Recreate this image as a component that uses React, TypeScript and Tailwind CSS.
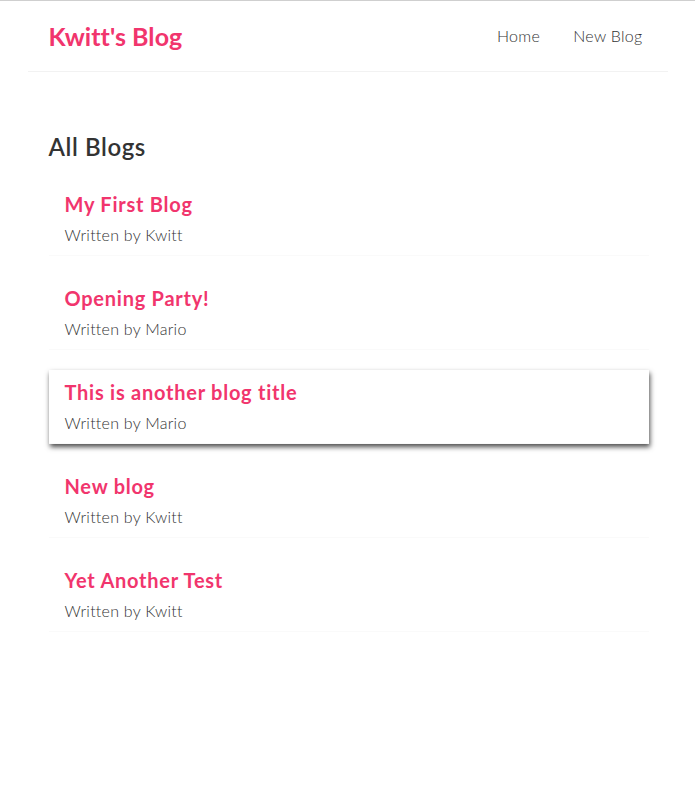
import React from "react";

const blogs = [
  { title: "My First Blog", author: "Kwitt" },
  { title: "Opening Party!", author: "Mario" },
  { title: "This is another blog title", author: "Mario", hover: true },
  { title: "New blog", author: "Kwitt" },
  { title: "Yet Another Test", author: "Kwitt" },
];

export default function App() {
  return (
    <div
      className="min-h-[799px] bg-white border-t border-[#cfcfcf] text-[#333]"
      style={{ fontFamily: "Lato, 'Noto Sans', sans-serif" }}
    >
      <nav className="w-[640px] mx-auto py-5 pl-[21px] pr-[19px] flex items-center border-b border-[#f2f2f2]">
        <h1 className="text-[25px] leading-[30px] font-bold tracking-[0.05px] text-[#f1356d]">Kwitt's Blog</h1>
        <div className="ml-auto flex text-[16px] leading-[18px] font-light tracking-[0.3px] text-[#333]">
          <a className="ml-4 p-1.5" href="#">Home</a>
          <a className="ml-[21px] p-1.5" href="#">New Blog</a>
        </div>
      </nav>
      <div className="w-[640px] mx-auto mt-10 py-5 pl-[21px] pr-[19px]">
        <h2 className="text-[24px] leading-[30px] font-semibold tracking-[0.6px] text-[#333]">All Blogs</h2>
        {blogs.map((b) => (
          <div
            key={b.title}
            className={
              "px-4 py-2.5 my-5 border-b border-[#fafafa] bg-white " +
              (b.hover ? "shadow-[1px_3px_5px_rgba(0,0,0,0.7)]" : "")
            }
          >
            <h2 className="text-[20px] leading-[25px] font-bold tracking-[0.75px] text-[#f1356d] mb-2">{b.title}</h2>
            <p className="text-[16px] leading-[20px] font-light tracking-[0.25px] text-[#333]">Written by {b.author}</p>
          </div>
        ))}
      </div>
    </div>
  );
}
